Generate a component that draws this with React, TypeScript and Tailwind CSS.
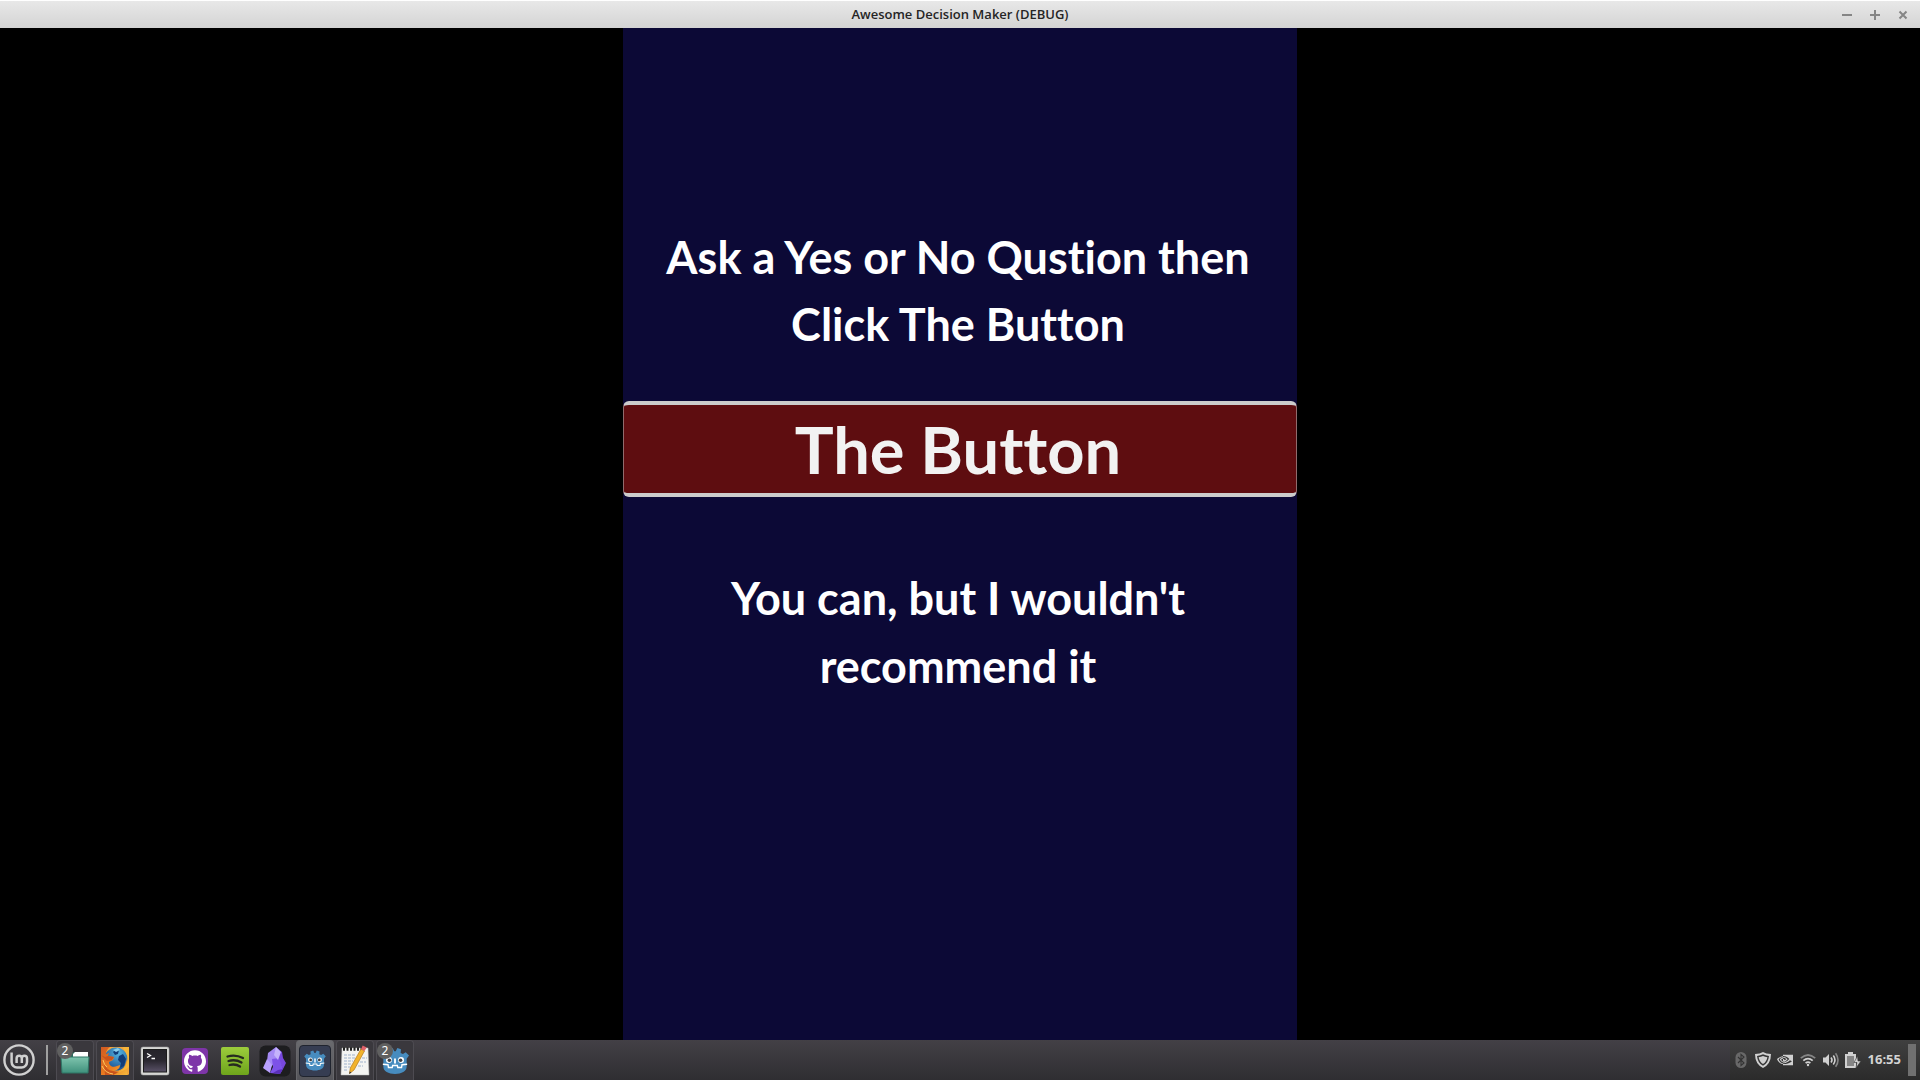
import type { ReactNode } from "react";
import { SiGithub, SiNvidia, SiSpotify } from "react-icons/si";

function MintLogo() {
  return (
    <svg viewBox="0 0 32 32" className="size-8" fill="none" stroke="#d0d0d0" strokeLinecap="butt">
      <circle cx="16" cy="16" r="14.6" strokeWidth="2.4" />
      <path d="M8.6 8.500V18a5.400 5.400 0 0 0 5.400 5.400h4.600a5.400 5.400 0 0 0 5.400-5.400v-3.600a2.600 2.600 0 0 0-5.200 0V19M18.800 14.400a2.600 2.600 0 0 0-5.200 0V19" strokeWidth="2.500" />
    </svg>
  );
}

function Folder() {
  return (
    <svg viewBox="0 0 32 32" className="size-8">
      <defs>
        <linearGradient id="folder" x1="0" y1="0" x2="0" y2="1">
          <stop offset="0" stopColor="#7fc4ae" />
          <stop offset="1" stopColor="#3f917c" />
        </linearGradient>
      </defs>
      <path d="M2 8h11l2-1h14v10H2z" fill="#2d6b5c" />
      <path d="M14 9l2-2h13v5H14z" fill="#fff" />
      <path d="M2 12h28l-1 16H3z" fill="url(#folder)" stroke="#2f7767" />
    </svg>
  );
}

function Firefox() {
  return (
    <svg viewBox="0 0 28 28" className="size-7">
      <defs>
        <radialGradient id="globe" cx=".6" cy=".25" r=".8">
          <stop offset="0" stopColor="#56b4e0" />
          <stop offset="1" stopColor="#15498c" />
        </radialGradient>
        <linearGradient id="fox" x1="0" y1="0" x2="1" y2="1">
          <stop offset="0" stopColor="#cf5a22" />
          <stop offset=".6" stopColor="#ec7f20" />
          <stop offset="1" stopColor="#f6b83c" />
        </linearGradient>
      </defs>
      <rect width="28" height="28" rx="1.500" fill="#f3a43a" />
      <circle cx="15" cy="12" r="11.500" fill="url(#globe)" />
      <path d="M15 2l3 1-1 4-3 1-2-3zM18 9l4-2 3 5-2 7-4 2 1-5-3-3z" fill="#123c78" />
      <path d="M12 3l5-2 2 2-4 2z" fill="#8ad0ee" />
      <path d="M0 0h9Q5 3 5 7l3-1-1 3 6 1-1 3-4 2c0 4 4 6 8 4l3-1c0 4-4 6-8 6 6 2 11-1 13-6l2-6v16H0z" fill="url(#fox)" />
      <path d="M0 8l4 2 3-1 6 1-2 3-5 1zM3 16q2 7 9 8l6 1-6 3H4z" fill="#c9541c" />
      <path d="M23 3q5 6 3 12-2 8-11 11 8-2 13-6V0h-6z" fill="#f7b63a" />
      <path d="M1 19q3 7 11 8M2 13q1 5 4 7" fill="none" stroke="#ffc95c" />
    </svg>
  );
}

function Terminal() {
  return (
    <svg viewBox="0 0 32 32" className="size-8">
      <defs>
        <linearGradient id="screen" x1="0" y1="0" x2="0" y2="1">
          <stop offset="0" stopColor="#25232a" />
          <stop offset=".5" stopColor="#2b2831" />
          <stop offset="1" stopColor="#5a5268" />
        </linearGradient>
      </defs>
      <rect x="2" y="2" width="28" height="28" rx="2" fill="#d6d6d4" stroke="#aaa" strokeWidth=".5" />
      <rect x="4.500" y="4.500" width="23" height="22.500" fill="url(#screen)" stroke="#1b1b1b" />
      <path d="M8 8.500l3.500 2-3.500 2M12.500 13.500H16" fill="none" stroke="#fff" strokeWidth="1.300" />
    </svg>
  );
}

function Spotify() {
  return (
    <svg viewBox="0 0 28 28" className="size-7">
      <defs>
        <linearGradient id="spot" x1="0" y1="0" x2="0" y2="1">
          <stop offset="0" stopColor="#9ccc3c" />
          <stop offset="1" stopColor="#6ea51c" />
        </linearGradient>
      </defs>
      <rect width="28" height="28" rx="2" fill="url(#spot)" />
      <path d="M6.500 9.500q8-2.500 15.500 1.500M7.500 14q7-2 13 1.500M8.500 18q6-1.500 10.500 1.500" fill="none" stroke="#262b20" strokeWidth="2.300" strokeLinecap="round" />
    </svg>
  );
}

function Obsidian() {
  return (
    <svg viewBox="0 0 32 32" className="size-8">
      <rect x="0.500" y="0.500" width="31" height="31" rx="6" fill="#1d1d1f" />
      <path d="M17 2l-8 6-1 8 4 6 7-8z" fill="#a58af5" />
      <path d="M17 2l6 5 1 6 3 5-3 6-5-10z" fill="#7748dd" />
      <path d="M8 14l-4 9 7 5 2-8z" fill="#b9a1ff" />
      <path d="M13 14l7-1 4 11-3 5-10-1 3-6z" fill="#7d52e8" />
      <path d="M17 2l-2 8 4 5 3-8z" fill="#c4b3fb" />
      <path d="M24 24l-3 5-7-1 5-3z" fill="#5a2fb9" />
    </svg>
  );
}

function GodotHead() {
  return (
    <>
      <path d="M1 9l3.500-3.500L7.500 7.500 10 6.300 9.600 2.500 13.500 1l1.700 3.500h1.600L18.500 1l3.900 1.500-.4 3.800 2.500 1.200 3-2L31 9l-2.500 3.500V21c0 5-5.500 8-12.500 8S3.500 26 3.500 21v-8.500z" fill="#478cbf" />
      <path d="M3 18.500l5.500.5.5 3h4l.5-2.200h5l.5 2.200h4l.5-3 5.500-.5" fill="none" stroke="#fff" strokeWidth="1.500" />
      <circle cx="9.500" cy="14" r="3.200" fill="#fff" />
      <circle cx="22.500" cy="14" r="3.200" fill="#fff" />
      <circle cx="10" cy="14.200" r="1.900" fill="#414042" />
      <circle cx="22" cy="14.200" r="1.900" fill="#414042" />
      <path d="M16 13v4" stroke="#fff" strokeWidth="2" strokeLinecap="round" />
    </>
  );
}

function GodotGame() {
  return (
    <svg viewBox="0 0 32 32" className="size-8">
      <rect x=".5" y=".5" width="31" height="31" rx="3.500" fill="#363d52" stroke="#20242f" />
      <svg x="4.500" y="4" width="23" height="23" viewBox="0 0 32 30">
        <GodotHead />
      </svg>
    </svg>
  );
}

function GodotEditor() {
  return (
    <svg viewBox="0 0 32 30" className="h-7 w-[30px]">
      <GodotHead />
    </svg>
  );
}

function Notes() {
  return (
    <svg viewBox="0 0 32 32" className="size-8">
      <path d="M3 3h26l1 27H2z" fill="#f4f4f2" stroke="#bbb" strokeWidth=".5" />
      <path d="M4 4h20" stroke="#222" strokeWidth="3.500" strokeDasharray="2 1.500" />
      <path d="M5 10h12M5 13h11M5 16h9M5 19h8M5 22h6M5 25h4M23 13h5M21 17h6M19 21h5" stroke="#9fb2cc" strokeWidth="1.200" strokeDasharray="3 1" />
      <path d="M22 4l3.500 2-10.500 19-4.500 3.500.8-5.500z" fill="#f2b32c" stroke="#b5781c" strokeWidth=".7" />
      <path d="M22 4l1.700-3.500 4 2L25.500 6z" fill="#e0626a" />
      <path d="M10.600 26.500l-.3 2.500 2.200-1.500z" fill="#333" />
    </svg>
  );
}

function TaskButton({ label, count, state = "idle", children }: { label: string; count?: number; state?: "idle" | "open" | "active"; children: ReactNode }) {
  const look = {
    idle: "border-transparent",
    open: "border-[#4d4b51] bg-[#3a383d]",
    active: "border-[#67676b] bg-linear-to-b from-[#6a6a6e] to-[#55555a]",
  }[state];
  return (
    <button aria-label={label} className={`relative flex h-10 w-[38px] items-center justify-center rounded-t-sm border border-b-0 ${look}`}>
      {children}
      {count && (
        <span className="absolute top-0.5 left-0 flex size-4 items-center justify-center rounded-full bg-[#606060] font-['Noto_Sans'] text-xs text-white">{count}</span>
      )}
    </button>
  );
}

const tray = "flex h-10 w-[22px] items-center justify-center text-[#d0d0d0]";

export default function App() {
  return (
    <div className="flex h-screen flex-col overflow-hidden bg-black font-['Noto_Sans',sans-serif]">
      <header className="grid h-7 shrink-0 grid-cols-[1fr_auto_1fr] items-center border-t border-white bg-linear-to-b from-[#e8e8e8] to-[#d4d4d4]">
        <h1 className="col-start-2 font-['Open_Sans',sans-serif] text-[13px] font-semibold text-[#252525]">Awesome Decision Maker (DEBUG)</h1>
        <div className="flex justify-end gap-2 pr-[7px] text-[#858585]">
          {[
            ["Minimize", "M5 10h10"],
            ["Maximize", "M5 10h10M10 5v10"],
            ["Close", "M6.500 6.500l7 7M13.500 6.500l-7 7"],
          ].map(([label, d]) => (
            <button key={label} aria-label={label} className="size-5">
              <svg viewBox="0 0 20 20" className="size-5" fill="none" stroke="currentColor" strokeWidth="2">
                <path d={d} />
              </svg>
            </button>
          ))}
        </div>
      </header>

      <main className="flex min-h-0 flex-1 justify-center">
        <section className="flex aspect-[2/3] h-full flex-col bg-[#0c0936] text-center font-['Lato',sans-serif] text-white [font-variant-ligatures:none]">
          <p className="mt-[196px] pr-1 text-[45px] leading-[67px] font-bold">
            Ask a Yes or No Qustion then
            <br />
            Click The Button
          </p>
          <button className="mt-[43px] h-24 rounded-md border-x border-y-4 border-x-[#8f6b6d] border-y-[#cccccc] bg-[#5e0d10] pr-1 text-[65px] leading-[84px] font-bold text-[#f2f2f2]">
            The Button
          </button>
          <output className="mt-[67px] pr-1 text-[45px] leading-[68px] font-bold">
            You can, but I wouldn't
            <br />
            recommend it
          </output>
        </section>
      </main>

      <footer className="flex h-10 shrink-0 items-center justify-between bg-linear-to-b from-[#434046] to-[#2f2e32]">
        <nav className="flex items-center">
          <button aria-label="Menu" className="ml-[3px]">
            <MintLogo />
          </button>
          <span className="ml-[11px] h-[30px] w-0.5 bg-[#a0a0a0]" />
          <div className="ml-2 flex gap-0.5">
            <TaskButton label="Files" count={2} state="open"><Folder /></TaskButton>
            <TaskButton label="Firefox" state="open"><Firefox /></TaskButton>
            <TaskButton label="Terminal"><Terminal /></TaskButton>
            <TaskButton label="GitHub">
              <span className="flex size-[26px] items-center justify-center rounded-sm bg-[#7e35a8]"><SiGithub className="size-[22px] text-white" /></span>
            </TaskButton>
            <TaskButton label="Spotify"><Spotify /></TaskButton>
            <TaskButton label="Obsidian"><Obsidian /></TaskButton>
            <TaskButton label="Awesome Decision Maker" state="active"><GodotGame /></TaskButton>
            <TaskButton label="Text Editor" state="open"><Notes /></TaskButton>
            <TaskButton label="Godot Engine" count={2} state="open"><GodotEditor /></TaskButton>
          </div>
        </nav>

        <div className="flex items-center self-stretch bg-linear-to-b from-[#404040] to-[#2b2b2b] pr-1">
          <button aria-label="Bluetooth" className={tray}>
            <svg viewBox="0 0 12 16" className="h-4 w-3">
              <rect x=".5" width="11" height="16" rx="5.500" fill="#686868" />
              <path d="M3 5l6 6-3 2.500v-11L9 5l-6 6" fill="none" stroke="#333" strokeWidth="1.100" />
            </svg>
          </button>
          <button aria-label="Updates" className={tray}>
            <svg viewBox="0 0 16 16" className="size-4">
              <path d="M8 0q3 2 8 2 0 10-8 14Q0 12 0 2q5 0 8-2z" fill="#d0d0d0" />
              <path d="M8 2.300q2.500 1.400 6 1.600-.6 6.800-6 9.900-5.400-3.100-6-9.900 3.500-.2 6-1.600z" fill="#353535" />
              <path d="M8 4q2 1 4.400 1.200Q11.800 9.500 8 12 4.200 9.500 3.600 5.200 6 5 8 4z" fill="#d0d0d0" />
            </svg>
          </button>
          <button aria-label="NVIDIA" className={tray}><SiNvidia className="size-4" /></button>
          <button aria-label="Network" className="flex h-10 w-6 items-center justify-center">
            <svg viewBox="0 0 16 14" className="h-3.5 w-4" fill="none" stroke="#d0d0d0" strokeWidth="1.800">
              <path d="M.8 5.200q7.200-6.500 14.400 0" stroke="#858585" />
              <path d="M3.300 7.700q4.700-4.200 9.400 0M5.600 10.100q2.400-2 4.800 0" />
              <circle cx="8" cy="12" r="1.200" fill="#d0d0d0" stroke="none" />
            </svg>
          </button>
          <button aria-label="Volume" className={tray}>
            <svg viewBox="0 0 16 16" className="size-4" fill="none" stroke="#d0d0d0" strokeWidth="1.600">
              <path d="M0 5.500h2.500L6 2v12l-3.500-3.500H0z" fill="#d0d0d0" stroke="none" />
              <path d="M8 5.500q2 2.500 0 5M10.300 3.500q3.400 4.500 0 9" />
              <path d="M12.600 1.200q4.800 6.800 0 13.600" stroke="#858585" />
            </svg>
          </button>
          <button aria-label="Battery" className={tray}>
            <svg viewBox="0 0 16 16" className="size-4">
              <path d="M3 2V0h5v2h3v14H0V2z" fill="#d0d0d0" />
              <path d="M2 4h7v10H2z" fill="#858585" />
              <path d="M12.500 4L9 10.500h3L11 16l5-7h-3z" fill="#d0d0d0" stroke="#353535" strokeWidth=".6" />
            </svg>
          </button>
          <time className="ml-1 font-['Open_Sans',sans-serif] text-[13px] font-bold text-[#d3d3d3]">16:55</time>
          <button aria-label="Show desktop" className="ml-[7px] h-8 w-2 bg-[#707070]" />
        </div>
      </footer>
    </div>
  );
}
